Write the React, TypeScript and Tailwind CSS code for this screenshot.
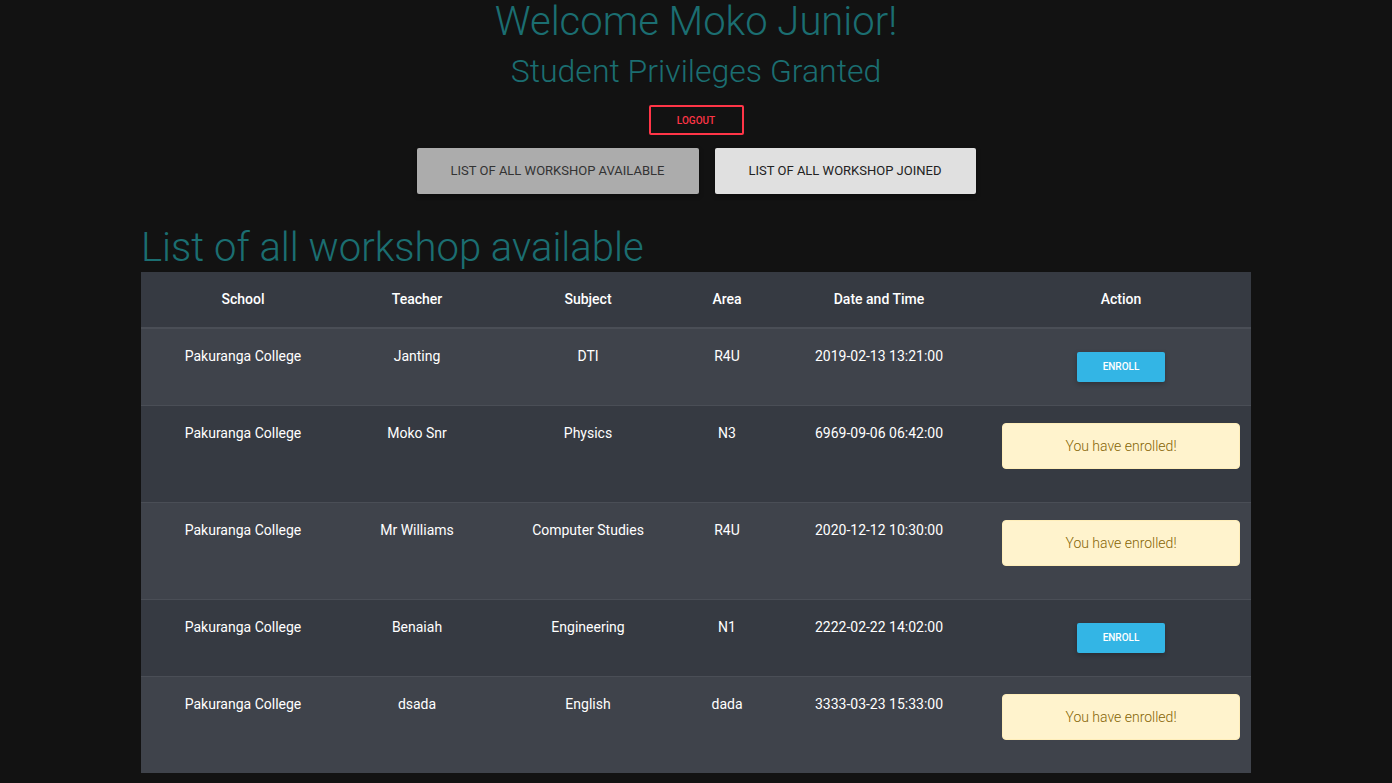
import React from 'react';

type Workshop = {
  school: string;
  teacher: string;
  subject: string;
  area: string;
  fecha: string;
  enrolled: boolean;
};

const workshops: Workshop[] = [
  { school: 'Pakuranga College', teacher: 'Janting', subject: 'DTI', area: 'R4U', fecha: '2019-02-13 13:21:00', enrolled: false },
  { school: 'Pakuranga College', teacher: 'Moko Snr', subject: 'Physics', area: 'N3', fecha: '6969-09-06 06:42:00', enrolled: true },
  { school: 'Pakuranga College', teacher: 'Mr Williams', subject: 'Computer Studies', area: 'R4U', fecha: '2020-12-12 10:30:00', enrolled: true },
  { school: 'Pakuranga College', teacher: 'Benaiah', subject: 'Engineering', area: 'N1', fecha: '2222-02-22 14:02:00', enrolled: false },
  { school: 'Pakuranga College', teacher: 'dsada', subject: 'English', area: 'dada', fecha: '3333-03-23 15:33:00', enrolled: true },
];

const App: React.FC = () => {
  return (
    <div className="min-h-screen bg-[#121212] font-['Roboto','Liberation_Sans',sans-serif] text-white">
      {/* Encabezado */}
      <div className="flex flex-col items-center">
        <h1 className="text-[40px] leading-[44px] font-light text-[#1b6e71]">Welcome Moko Junior!</h1>
        <h2 className="mt-[8px] text-[32px] leading-[38px] font-light text-[#1b6e71]">Student Privileges Granted</h2>
        <button className="mt-[15px] h-[30px] w-[95px] rounded-[2px] border-2 border-[#ff3547] text-[10px] font-medium text-[#ff3547]">
          LOGOUT
        </button>
        <div className="mt-[13px] flex gap-4">
          <button className="h-[46px] w-[282px] rounded-[2px] bg-[#acacac] text-[13px] text-[#333] shadow-[0_2px_5px_rgba(0,0,0,0.3)]">
            LIST OF ALL WORKSHOP AVAILABLE
          </button>
          <button className="h-[46px] w-[261px] rounded-[2px] bg-[#e0e0e0] text-[13px] text-[#222] shadow-[0_2px_5px_rgba(0,0,0,0.3)]">
            LIST OF ALL WORKSHOP JOINED
          </button>
        </div>
      </div>

      {/* Tabla de talleres */}
      <div className="mx-auto mt-[30px] w-[1110px]">
        <h1 className="text-[40px] leading-[48px] font-light text-[#1b6e71]">List of all workshop available</h1>
        <table className="w-full table-fixed text-center text-[14px]">
          <colgroup>
            <col className="w-[204px]" />
            <col className="w-[144px]" />
            <col className="w-[198px]" />
            <col className="w-[80px]" />
            <col className="w-[224px]" />
            <col className="w-[260px]" />
          </colgroup>
          <thead>
            <tr className="h-[56px] border-b-2 border-[#4a4e56] bg-[#363a42]">
              <th className="font-medium">School</th>
              <th className="font-medium">Teacher</th>
              <th className="font-medium">Subject</th>
              <th className="font-medium">Area</th>
              <th className="font-medium">Date and Time</th>
              <th className="font-medium">Action</th>
            </tr>
          </thead>
          <tbody>
            {workshops.map((w, i) => (
              <tr
                key={i}
                className={`${i % 2 === 0 ? 'bg-[#3f434b]' : 'bg-[#363a42]'} ${i > 0 ? 'border-t border-[#4a4e56]' : ''} align-top leading-[20px]`}
              >
                <td className="py-[17px]">{w.school}</td>
                <td className="py-[17px]">{w.teacher}</td>
                <td className="py-[17px]">{w.subject}</td>
                <td className="py-[17px]">{w.area}</td>
                <td className="py-[17px]">{w.fecha}</td>
                <td className="px-[11px] py-[17px]">
                  {w.enrolled ? (
                    <div className="mb-4 rounded-[4px] border border-[#ffeeba] bg-[#fff3cd] py-[12px] font-light text-[#856404]">
                      You have enrolled!
                    </div>
                  ) : (
                    <button className="my-[6px] h-[30px] w-[88px] rounded-[2px] bg-[#33b5e5] text-[10px] font-medium text-white shadow-[0_2px_5px_rgba(0,0,0,0.25)]">
                      ENROLL
                    </button>
                  )}
                </td>
              </tr>
            ))}
          </tbody>
        </table>
      </div>
    </div>
  );
};

export default App;
